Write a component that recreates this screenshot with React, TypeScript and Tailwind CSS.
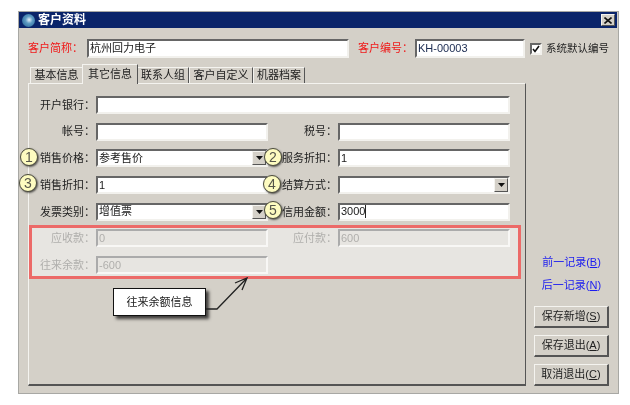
const font = { fontFamily: '"Liberation Sans", "Noto Sans CJK SC", sans-serif' };

const sunken = "border-2 border-t-[#666] border-l-[#666] border-b-[#f2f1ed] border-r-[#f2f1ed]";
const raised = "border border-t-[#f4f3ef] border-l-[#f4f3ef] border-b-[#555] border-r-[#555]";

function Label({ text, dim }: { text: string; dim?: boolean }) {
  return (
    <div className={`flex h-[18px] items-center justify-end pr-[1px] text-[11px] whitespace-nowrap ${dim ? "text-[#6e6c68]" : "text-[#222]"}`}>
      {text}
    </div>
  );
}

function Field({ value, wide, dim, caret }: { value?: string; wide?: boolean; dim?: boolean; caret?: boolean }) {
  return (
    <div
      className={`flex h-[18px] items-center pl-[1px] text-[11px] leading-none ${sunken} ${wide ? "col-span-3" : ""} ${
        dim ? "border-t-[#8a8a8a] border-l-[#8a8a8a] bg-[#d4d0c8] text-[#6e6c68]" : "bg-white text-[#1a1a1a]"
      }`}
    >
      {value}
      {caret && <span className="h-[13px] w-px bg-[#222]" />}
    </div>
  );
}

function Combo({ value }: { value?: string }) {
  return (
    <div className={`flex h-[18px] items-center justify-between pl-[1px] text-[11px] leading-none bg-white text-[#1a1a1a] ${sunken}`}>
      <span>{value}</span>
      <div className={`flex h-[14px] w-[14px] items-center justify-center bg-[#d4d0c8] ${raised}`}>
        <svg width="7" height="4" viewBox="0 0 7 4">
          <path d="M0 0h7L3.5 4z" fill="#111" />
        </svg>
      </div>
    </div>
  );
}

function Badge({ n, x, y }: { n: number; x: number; y: number }) {
  return (
    <div
      className="absolute flex h-[18px] w-[18px] items-center justify-center rounded-full border-[1.5px] border-[#4a4a3c] bg-[#fdfbc0] text-[14px] leading-none text-[#55554a] shadow-[1px_1px_2px_rgba(0,0,0,0.6)]"
      style={{ left: x - 9, top: y - 9 }}
    >
      {n}
    </div>
  );
}

function Tab({ text, width, active }: { text: string; width: number; active?: boolean }) {
  return (
    <div
      className={`relative flex items-center justify-center border-t border-l border-r border-t-[#f4f3ef] border-l-[#f4f3ef] border-r-[#555] bg-[#d4d0c8] text-[11px] text-[#222] ${
        active ? "z-10 -mb-px h-[20px] -mx-[1px]" : "h-[16px]"
      }`}
      style={{ width }}
    >
      {text}
    </div>
  );
}

function Button({ text, hot }: { text: string; hot: string }) {
  return (
    <div className={`flex h-[22px] w-[75px] items-center justify-center bg-[#d4d0c8] text-[11px] text-[#222] ${raised} border-b-2 border-r-2`}>
      {text}(<span className="underline">{hot}</span>)
    </div>
  );
}

export default function App() {
  return (
    <div className="relative h-[405px] w-[630px] overflow-hidden bg-white pl-[18px] pt-[11px] blur-[0.35px]" style={font}>
      {/* window */}
      <div className="h-[383px] w-[601px] border border-[#a8a8a4] bg-[#d4d0c8]">
        <div className="flex h-[16px] w-[598px] items-center justify-between bg-[#0a246a] pl-[3px] pr-[2px]">
          <div className="flex items-center gap-[3px]">
            <div className="h-[13px] w-[13px] rounded-full bg-[radial-gradient(circle_at_55%_45%,#e8f2fa_0%,#5f9cc4_35%,#1a5a8c_100%)]" />
            <span className="text-[12px] font-bold text-white">客户资料</span>
          </div>
          <div className={`flex h-[12px] w-[14px] items-center justify-center bg-[#d4d0c8] ${raised}`}>
            <svg width="8" height="7" viewBox="0 0 8 7">
              <path d="M0.5 0.5L7.5 6.5M7.5 0.5L0.5 6.5" stroke="#111" strokeWidth="1.6" />
            </svg>
          </div>
        </div>

        <div className="pl-[9px] pt-[11px]">
          {/* header row */}
          <div className="flex h-[19px] items-center text-[11px]">
            <span className="w-[59px] text-[#f01818]">客户简称：</span>
            <div className={`flex h-[19px] w-[262px] items-center pl-[1px] bg-white text-[#1a1a1a] ${sunken}`}>杭州回力电子</div>
            <span className="ml-[9px] w-[57px] text-[#f01818]">客户编号：</span>
            <div className={`flex h-[19px] w-[110px] items-center pl-[1px] bg-white text-[#1a2a50] ${sunken}`}>KH-00003</div>
            <div className={`ml-[5px] flex h-[12px] w-[12px] items-center justify-center bg-white ${sunken}`}>
              <svg width="8" height="8" viewBox="0 0 8 8">
                <path d="M1 4l2 2.5L7 1" fill="none" stroke="#111" strokeWidth="1.6" />
              </svg>
            </div>
            <span className="ml-[4px] text-[10.5px] text-[#222]">系统默认编号</span>
          </div>

          <div className="mt-[7px] flex items-stretch">
            {/* tabs + panel */}
            <div className="w-[498px]">
              <div className="relative z-10 flex h-[18px] items-end pl-[2px]">
                <Tab text="基本信息" width={53} />
                <Tab text="其它信息" width={56} active />
                <Tab text="联系人组" width={52} />
                <Tab text="客户自定义" width={64} />
                <Tab text="机器档案" width={52} />
              </div>
              <div className="h-[303px] border border-t-[#f4f3ef] border-l-[#f4f3ef] border-b-[#555] border-b-2 border-r-[#555] pt-[12px]">
                <div className="grid grid-cols-[67px_172px_70px_172px] gap-y-[8.7px]">
                  <Label text="开户银行：" />
                  <Field wide />
                  <Label text="帐号：" />
                  <Field />
                  <Label text="税号：" />
                  <Field />
                  <Label text="销售价格：" />
                  <Combo value="参考售价" />
                  <Label text="服务折扣：" />
                  <Field value="1" />
                  <Label text="销售折扣：" />
                  <Field value="1" />
                  <Label text="结算方式：" />
                  <Combo />
                  <Label text="发票类别：" />
                  <Combo value="增值票" />
                  <Label text="信用金额：" />
                  <Field value="3000" caret />
                  <Label text="应收款：" dim />
                  <Field value="0" dim />
                  <Label text="应付款：" dim />
                  <Field value="600" dim />
                  <Label text="往来余款：" dim />
                  <Field value="-600" dim />
                </div>
              </div>
            </div>

            {/* right column */}
            <div className="ml-[8px] flex w-[75px] flex-col justify-end gap-[7px]">
              <div className="mb-[8px] flex flex-col items-center gap-[11px] text-[11px] leading-[12px] text-[#1c1cf0]">
                <span>
                  前一记录(<span className="underline">B</span>)
                </span>
                <span>
                  后一记录(<span className="underline">N</span>)
                </span>
              </div>
              <Button text="保存新增" hot="S" />
              <Button text="保存退出" hot="A" />
              <Button text="取消退出" hot="C" />
            </div>
          </div>
        </div>
      </div>

      {/* annotations */}
      <div className="absolute left-[29px] top-[225px] h-[54px] w-[492px] border-[3px] border-[#ec6a68] bg-white/45" />
      <Badge n={1} x={29} y={157} />
      <Badge n={2} x={273} y={157} />
      <Badge n={3} x={28} y={183} />
      <Badge n={4} x={272} y={184} />
      <Badge n={5} x={273} y={210} />
      <div className="absolute left-[113px] top-[288px] flex h-[28px] w-[93px] items-center justify-center border border-[#111] bg-white text-[11px] text-[#222] shadow-[3px_3px_3px_rgba(0,0,0,0.7)]">
        往来余额信息
      </div>
      <svg className="absolute left-[200px] top-[272px]" width="56" height="44" viewBox="0 0 56 44">
        <path d="M6 37H17L47 6M35 11L47 6L42 18" fill="none" stroke="#222" strokeWidth="1.3" />
      </svg>
    </div>
  );
}
